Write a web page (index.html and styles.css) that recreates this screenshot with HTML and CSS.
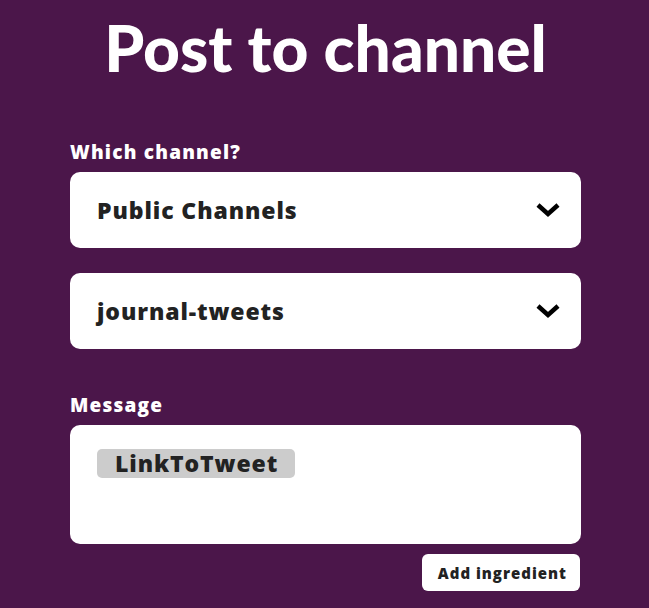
FILE: index.html
```html
<!doctype html>
<html lang="en">
  <head>
    <meta charset="UTF-8" />
    <meta name="viewport" content="width=device-width, initial-scale=1.0" />
    <title>Post to channel</title>
    <link rel="stylesheet" href="styles.css">
  </head>
  <body>
    <div class="container">
      <h1>Post to channel</h1>

      <label class="field-label">Which channel?</label>
      <div class="select">
        <span>Public Channels</span>
        <svg class="chevron" width="26" height="16" viewBox="0 0 26 16">
          <path d="M3 3 L13 12 L23 3" fill="none" stroke="#000" stroke-width="4.5" />
        </svg>
      </div>

      <div class="select">
        <span>journal-tweets</span>
        <svg class="chevron" width="26" height="16" viewBox="0 0 26 16">
          <path d="M3 3 L13 12 L23 3" fill="none" stroke="#000" stroke-width="4.5" />
        </svg>
      </div>

      <label class="field-label message-label">Message</label>
      <div class="textarea">
        <span class="ingredient">LinkToTweet</span>
      </div>

      <div class="actions">
        <button>Add ingredient</button>
      </div>
    </div>
  </body>
</html>
```

FILE: styles.css
```css
body {
  margin: 0;
  background-color: #4b164a;
  font-family: "Open Sans", Lato, sans-serif;
  color: #222;
}
.container {
  width: 511px;
  margin: 0 0 0 70px;
  padding-top: 8px;
  display: flex;
  flex-direction: column;
}
h1 {
  margin: 0 0 52px;
  color: white;
  text-align: center;
  font-family: Lato, sans-serif;
  font-size: 64px;
  font-weight: 900;
  line-height: 80px;
}
.field-label {
  color: white;
  font-size: 19px;
  font-weight: 800;
  line-height: 24px;
  letter-spacing: 1.2px;
  margin-bottom: 8px;
}
.message-label {
  margin-top: 44px;
}
.select {
  display: flex;
  align-items: center;
  justify-content: space-between;
  height: 76px;
  padding: 0 20px 0 27px;
  background: white;
  border-radius: 10px;
  margin-bottom: 25px;
  font-size: 23px;
  font-weight: 800;
  letter-spacing: 0.9px;
}
.select + .select {
  margin-bottom: 0;
}
.chevron {
  display: block;
}
.textarea {
  height: 119px;
  box-sizing: border-box;
  padding: 24px 27px;
  background: white;
  border-radius: 10px;
}
.ingredient {
  display: inline-block;
  padding: 0 17px 0 18px;
  background: #ccc;
  border-radius: 5px;
  font-size: 23px;
  font-weight: 800;
  line-height: 29px;
  letter-spacing: 0.9px;
}
.actions {
  display: flex;
  justify-content: flex-end;
  margin-top: 10px;
}
button {
  background: white;
  color: #222;
  border: none;
  border-radius: 6px;
  padding: 0 13px 0 16px;
  height: 37px;
  font-family: "Open Sans", sans-serif;
  font-size: 15px;
  font-weight: 800;
  letter-spacing: 1px;
  margin-right: 1px;
}
```
